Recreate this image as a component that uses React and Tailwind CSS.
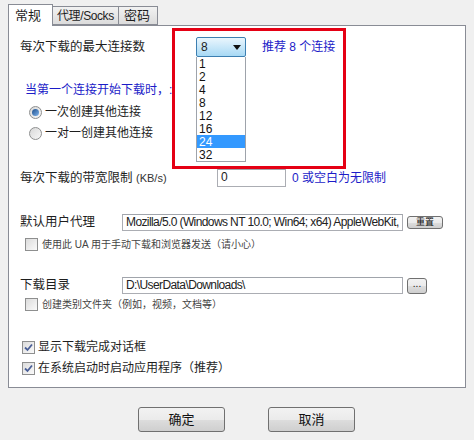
import React from 'react';

const FONT = '[font-family:"Liberation_Sans","Noto_Sans_CJK_SC",sans-serif]';

const Radio = ({ checked }) => (
    <span className="w-[13px] h-[13px] rounded-full border border-[#8e8f8f] bg-gradient-to-br from-[#d8d8d8] to-[#f8f8f8] flex items-center justify-center shrink-0">
        {checked && <span className="w-[7px] h-[7px] rounded-full bg-gradient-to-br from-[#1d4f8c] to-[#7eb3ec]" />}
    </span>
);

const Check = ({ checked }) => (
    <span className="w-[13px] h-[13px] border border-[#8e8f8f] bg-gradient-to-br from-[#dcdcdc] to-[#fafafa] flex items-center justify-center shrink-0">
        {checked && (
            <svg width="9" height="9" viewBox="0 0 9 9">
                <path d="M1 4.5 L3.5 7 L8 1.5" fill="none" stroke="#4a5f97" strokeWidth="1.8" />
            </svg>
        )}
    </span>
);

const WinButton = ({ children, className = '' }) => (
    <div className={`border border-[#707070] rounded-[3px] bg-[linear-gradient(#f2f2f2_0%,#ebebeb_50%,#dddddd_51%,#cfcfcf_100%)] flex items-center justify-center text-[#111] shrink-0 ${className}`}>
        {children}
    </div>
);

const Input = ({ value, className = '' }) => (
    <div className={`border border-[#abadb3] border-t-[#a0a4ab] bg-white pl-[3px] overflow-hidden shrink-0 ${className}`}>
        <div className="text-[12px] leading-[15px] tracking-[-0.6px] text-[#222] whitespace-nowrap overflow-hidden">{value}</div>
    </div>
);

const options = ['1', '2', '4', '8', '12', '16', '24', '32'];

export default function App() {
    return (
        <div className={`w-[474px] h-[440px] bg-[#f0f0f0] relative overflow-hidden ${FONT} text-[12px] text-[#1e1e1e] leading-none`}>
            {/* tabs */}
            <div className="flex items-end h-[26px] pl-[8px] pt-[4px] relative z-10 whitespace-nowrap">
                <div className="w-[45px] h-[22px] bg-white border border-[#898c95] border-b-0 flex items-start pt-[4px] pl-[6px] text-[13px]">常规</div>
                <div className="w-[66px] h-[19px] mb-[1px] bg-gradient-to-b from-[#f2f2f2] to-[#dcdcdc] border border-[#898c95] border-l-0 flex items-center pl-[4px] text-[12px] tracking-[-0.4px]">代理/Socks</div>
                <div className="w-[39px] h-[19px] mb-[1px] bg-gradient-to-b from-[#f2f2f2] to-[#dcdcdc] border border-[#898c95] border-l-0 flex items-center pl-[5px] text-[13px]">密码</div>
            </div>

            {/* panel */}
            <div className="mx-[8px] -mt-[1px] w-[458px] h-[363px] border border-[#898c95] bg-white pl-[11px]">
                <div className="mt-[11px] h-[20px] flex items-center">
                    <span className="w-[176px] text-[12.5px]">每次下载的最大连接数</span>
                    <div className="relative">
                        <div className="w-[50px] h-[20px] border border-[#3c7fb1] rounded-[2px] bg-gradient-to-b from-[#eaf6fd] to-[#a7d9f5] flex items-center justify-between px-[4px]">
                            <span className="text-[12px]">8</span>
                            <svg width="8" height="5" viewBox="0 0 8 5"><path d="M0 0 H8 L4 5 Z" fill="#111" /></svg>
                        </div>
                        <div className="absolute left-0 top-[20px] w-[50px] bg-white border border-[#9ea3ab] border-t-0 z-20">
                            {options.map((o) => (
                                <div key={o} className={`h-[13px] pl-[2px] flex items-center text-[12px] ${o === '24' ? 'bg-[#3399ff] text-white' : 'text-[#111]'}`}>{o}</div>
                            ))}
                        </div>
                    </div>
                    <span className="ml-[16px] text-[12px] text-[#1c1cc8]">推荐 8 个连接</span>
                </div>

                <div className="mt-[25px] h-[16px] flex items-center pl-[5px] text-[12px] text-[#1c1cc8] whitespace-nowrap">当第一个连接开始下载时，:</div>

                <div className="mt-[6px] h-[16px] flex items-center gap-[3px] pl-[9px]">
                    <Radio checked />
                    <span>一次创建其他连接</span>
                </div>
                <div className="mt-[5px] h-[16px] flex items-center gap-[3px] pl-[9px]">
                    <Radio />
                    <span>一对一创建其他连接</span>
                </div>

                <div className="mt-[28px] h-[18px] flex items-center">
                    <span className="w-[197px] text-[12.5px]">每次下载的带宽限制 <span className="text-[11px] text-[#333]">(KB/s)</span></span>
                    <Input value="0" className="w-[69px] h-[18px]" />
                    <span className="ml-[6px] text-[12px] text-[#1c1cc8]">0 或空白为无限制</span>
                </div>

                <div className="mt-[27px] h-[17px] flex items-center">
                    <span className="w-[102px] text-[12.5px]">默认用户代理</span>
                    <Input value="Mozilla/5.0 (Windows NT 10.0; Win64; x64) AppleWebKit," className="w-[281px] h-[17px]" />
                    <WinButton className="ml-[4px] w-[36px] h-[13px] text-[9px]">重置</WinButton>
                </div>
                <div className="mt-[7px] h-[13px] flex items-center gap-[4px] pl-[5px]">
                    <Check />
                    <span className="text-[10px] text-[#444]">使用此 UA 用于手动下载和浏览器发送（请小心）</span>
                </div>

                <div className="mt-[26px] h-[17px] flex items-center">
                    <span className="w-[102px] text-[12.5px]">下载目录</span>
                    <Input value="D:\UserData\Downloads\" className="w-[281px] h-[17px]" />
                    <WinButton className="ml-[4px] w-[20px] h-[16px] text-[10px] pb-[3px]">...</WinButton>
                </div>
                <div className="mt-[4px] h-[13px] flex items-center gap-[4px] pl-[5px]">
                    <Check />
                    <span className="text-[10px] text-[#444]">创建类别文件夹（例如，视频，文档等）</span>
                </div>

                <div className="mt-[29px] h-[14px] flex items-center gap-[3px] pl-[2px]">
                    <Check checked />
                    <span>显示下载完成对话框</span>
                </div>
                <div className="mt-[7px] h-[14px] flex items-center gap-[3px] pl-[2px]">
                    <Check checked />
                    <span>在系统启动时启动应用程序（推荐）</span>
                </div>
            </div>

            {/* buttons */}
            <div className="mt-[19px] flex pl-[138px] gap-[43px]">
                <WinButton className="w-[87px] h-[25px] text-[13px]">确定</WinButton>
                <WinButton className="w-[87px] h-[25px] text-[13px]">取消</WinButton>
            </div>

            {/* annotation */}
            <div className="absolute left-[172px] top-[28px] w-[174px] h-[141px] border-[3px] border-[#e50014] z-30 pointer-events-none" />
        </div>
    );
}
